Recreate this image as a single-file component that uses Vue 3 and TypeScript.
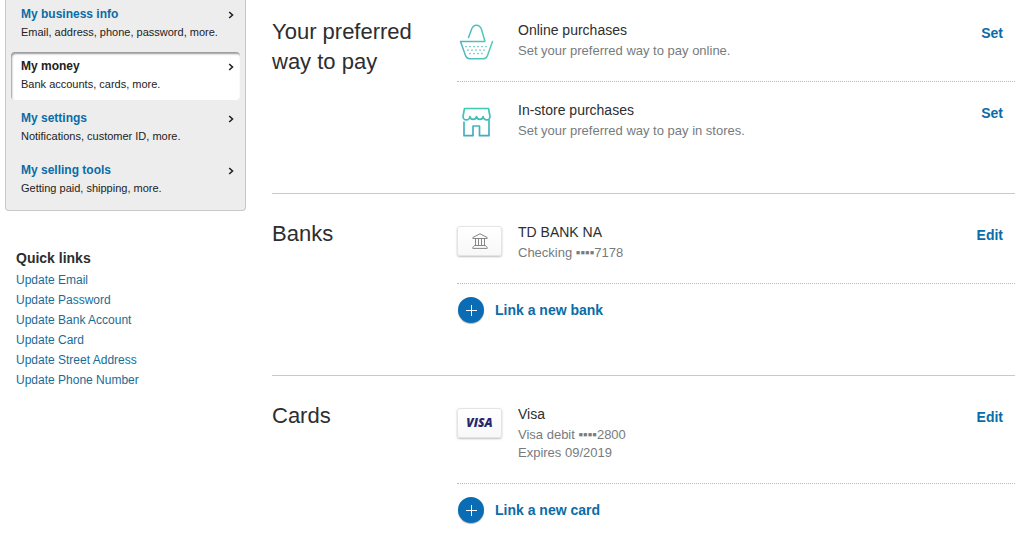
<script setup lang="ts">
interface MenuItem {
  title: string
  text: string
  active?: boolean
}

const menu: MenuItem[] = [
  { title: 'My business info', text: 'Email, address, phone, password, more.' },
  { title: 'My money', text: 'Bank accounts, cards, more.', active: true },
  { title: 'My settings', text: 'Notifications, customer ID, more.' },
  { title: 'My selling tools', text: 'Getting paid, shipping, more.' },
]

const quickLinks: string[] = [
  'Update Email',
  'Update Password',
  'Update Bank Account',
  'Update Card',
  'Update Street Address',
  'Update Phone Number',
]

interface Row {
  icon: 'basket' | 'store' | 'bank' | 'visa'
  title: string
  lines: string[]
  action: string
}

interface Section {
  heading: string
  rows: Row[]
  add?: string
}

const sections: Section[] = [
  {
    heading: 'Your preferred way to pay',
    rows: [
      { icon: 'basket', title: 'Online purchases', lines: ['Set your preferred way to pay online.'], action: 'Set' },
      { icon: 'store', title: 'In-store purchases', lines: ['Set your preferred way to pay in stores.'], action: 'Set' },
    ],
  },
  {
    heading: 'Banks',
    rows: [{ icon: 'bank', title: 'TD BANK NA', lines: ['Checking ▪▪▪▪7178'], action: 'Edit' }],
    add: 'Link a new bank',
  },
  {
    heading: 'Cards',
    rows: [{ icon: 'visa', title: 'Visa', lines: ['Visa debit ▪▪▪▪2800', 'Expires 09/2019'], action: 'Edit' }],
    add: 'Link a new card',
  },
]
</script>

<template>
  <div class="page">
    <aside class="side">
      <nav class="menu" aria-label="Profile">
        <a v-for="m in menu" :key="m.title" href="#" class="item" :class="{ active: m.active }">
          <span class="item-body">
            <span class="item-title">{{ m.title }}</span>
            <span class="item-text">{{ m.text }}</span>
          </span>
          <svg class="chevron" viewBox="0 0 6 8" aria-hidden="true">
            <path d="M1.200 1 4.500 4 1.200 7" fill="none" stroke="#222" stroke-width="1.600" />
          </svg>
        </a>
      </nav>
      <section class="quick">
        <h3>Quick links</h3>
        <ul>
          <li v-for="q in quickLinks" :key="q"><a href="#">{{ q }}</a></li>
        </ul>
      </section>
    </aside>

    <main class="main">
      <section v-for="s in sections" :key="s.heading" class="section">
        <h2>{{ s.heading }}</h2>
        <div class="rows">
          <div v-for="r in s.rows" :key="r.title" class="row">
            <svg v-if="r.icon === 'basket'" class="icon" viewBox="0 0 45 36" aria-hidden="true">
              <defs>
                <linearGradient id="basketStroke" gradientUnits="userSpaceOnUse" x1="3" y1="0" x2="35" y2="0">
                  <stop offset="0" stop-color="#4fb3c4" />
                  <stop offset="1" stop-color="#52cdb4" />
                </linearGradient>
              </defs>
              <g fill="none" stroke="url(#basketStroke)" stroke-width="1.500" stroke-linecap="round" stroke-linejoin="round">
                <path d="M11.500 13.500 14.500 5.500C15.500 2.500 17 1.300 19.500 1.300S23.500 2.500 24.500 5.500L28 17.500" />
                <path d="M27 17.500H3.500L8.500 31.500C9.300 33.800 10.500 34.700 12.500 34.700H26.500C28.500 34.700 29.700 33.800 30.500 31.500L35.500 17.500" />
              </g>
              <g stroke="#5cc4bf" stroke-width="1.700" stroke-linecap="round" stroke-dasharray="0 4">
                <path d="M9 22.500H30" />
                <path d="M11 26H29" />
                <path d="M13 29.500H27" />
              </g>
            </svg>
            <svg v-else-if="r.icon === 'store'" class="icon" viewBox="0 0 45 36" aria-hidden="true">
              <defs>
                <linearGradient id="storeStroke" gradientUnits="userSpaceOnUse" x1="0" y1="4" x2="0" y2="33">
                  <stop offset="0" stop-color="#42c9b2" />
                  <stop offset="1" stop-color="#45a9c4" />
                </linearGradient>
              </defs>
              <g fill="none" stroke="url(#storeStroke)" stroke-width="1.700" stroke-linecap="round" stroke-linejoin="round">
                <path d="M7.500 4.500H31.500L33 12.500A3.400 3.400 0 0 1 26.200 12.500A3.400 3.400 0 0 1 19.500 12.500A3.400 3.400 0 0 1 12.800 12.500A3.400 3.400 0 0 1 6 12.500Z" />
                <path d="M7 18V31.700H16V22H22.500V31.700H32V16" />
              </g>
            </svg>
            <span v-else class="card">
              <svg v-if="r.icon === 'bank'" width="16" height="16" viewBox="0 0 16 16" aria-hidden="true">
                <g fill="none" stroke="#858585" stroke-width="1" stroke-linejoin="round">
                  <path d="M0.800 4.500 8 0.800 15.200 4.500V5.500H0.800Z" />
                  <path d="M3.500 6V12M6.500 6V12M9.500 6V12M12.500 6V12" />
                  <path d="M2.500 12.500H13.500L15.200 14.500V15.400H0.800V14.500Z" />
                </g>
              </svg>
              <span v-else class="visa">VISA</span>
            </span>
            <div class="info">
              <p class="title">{{ r.title }}</p>
              <p v-for="l in r.lines" :key="l" class="line">{{ l }}</p>
            </div>
            <button type="button" class="action">{{ r.action }}</button>
          </div>
          <button v-if="s.add" type="button" class="add">
            <span class="plus">
              <svg width="12" height="12" viewBox="0 0 12 12" aria-hidden="true">
                <path d="M6.500 1V12M1 6.500H12" stroke="#fff" stroke-width="1" />
              </svg>
            </span>
            {{ s.add }}
          </button>
        </div>
      </section>
    </main>
  </div>
</template>

<style>
body {
  margin: 0;
  background: #fff;
}
</style>

<style scoped>
.page {
  display: flex;
  align-items: flex-start;
  gap: 26px;
  padding-left: 5px;
  font-family: "Liberation Sans", Arial, sans-serif;
  color: #2c2e2f;
}
.side {
  flex: 0 0 241px;
}
.menu {
  display: flex;
  flex-direction: column;
  gap: 4px;
  padding: 0 5px 6px;
  background: #ededed;
  border: 1px solid #c8c8c8;
  border-top: 0;
  border-radius: 0 0 4px 4px;
}
.item {
  display: flex;
  justify-content: space-between;
  align-items: flex-start;
  padding: 5px 6px 7px 10px;
  border-radius: 4px;
  text-decoration: none;
  color: #222;
}
.item.active {
  background: #fff;
  box-shadow: inset 1px 2px 2px #999;
}
.item-body {
  display: flex;
  flex-direction: column;
  line-height: 18px;
  white-space: nowrap;
}
.item-title {
  font-size: 12px;
  font-weight: bold;
  color: #0a6ca8;
}
.active .item-title {
  color: #222;
}
.item-text {
  font-size: 11px;
}
.chevron {
  width: 6px;
  height: 8px;
  margin-top: 6px;
}
.quick {
  margin-top: 35px;
  padding-left: 11px;
}
h3 {
  margin: 0;
  font-size: 14px;
  line-height: 24px;
}
ul {
  margin: 0;
  padding: 0;
  list-style: none;
  font-size: 12px;
  line-height: 20px;
}
ul a {
  color: #1a6c94;
  text-decoration: none;
}
.main {
  flex: 1;
  min-width: 0;
}
.section {
  display: flex;
  align-items: flex-start;
  padding: 10px 0 32px;
  border-bottom: 1px solid #c6cacc;
}
.section:first-child {
  padding-top: 2px;
}
.section:last-child {
  padding-bottom: 0;
  border-bottom: 0;
}
h2 {
  flex: 0 0 145px;
  margin: 15px 40px 0 0;
  font-size: 22px;
  font-weight: normal;
  line-height: 30px;
}
.rows {
  flex: 1;
  min-width: 0;
}
.row {
  display: flex;
  align-items: flex-start;
  padding: 17px 12px 21px 0;
}
.row:not(:last-child) {
  border-bottom: 1px dotted #bbb;
}
.icon {
  flex: none;
  width: 45px;
  height: 36px;
  margin: 5px 16px 0 0;
}
.card {
  flex: none;
  box-sizing: border-box;
  display: flex;
  align-items: center;
  justify-content: center;
  width: 45px;
  height: 30px;
  margin: 5px 16px 0 0;
  border: 1px solid #e4e4e4;
  border-radius: 3px;
  background: linear-gradient(#fff, #f8f8f8);
  box-shadow: 0 1px 2px rgba(0, 0, 0, 0.25);
}
.visa {
  font-family: "Open Sans", "Noto Sans", sans-serif;
  font-size: 12px;
  line-height: 18px;
  font-weight: 800;
  font-style: italic;
  color: #25286a;
}
.info {
  flex: 1;
}
p {
  margin: 0;
}
.title {
  margin-bottom: 1px;
  font-size: 14px;
  line-height: 22px;
}
.line {
  font-size: 13px;
  line-height: 18px;
  color: #777b7e;
}
button {
  padding: 0;
  border: 0;
  background: none;
  font-family: inherit;
  font-size: 14px;
  font-weight: bold;
  color: #0a6ca8;
  cursor: pointer;
}
.action {
  margin-top: 3px;
  line-height: 22px;
}
.add {
  display: flex;
  align-items: center;
  gap: 11px;
  padding: 13px 0 20px 1px;
}
.section:last-child .add {
  padding-bottom: 8px;
}
.plus {
  display: flex;
  align-items: center;
  justify-content: center;
  width: 26px;
  height: 26px;
  border-radius: 50%;
  background: #0a6cb4;
  box-shadow: 0 1px 1px rgba(0, 0, 0, 0.3);
}
</style>
